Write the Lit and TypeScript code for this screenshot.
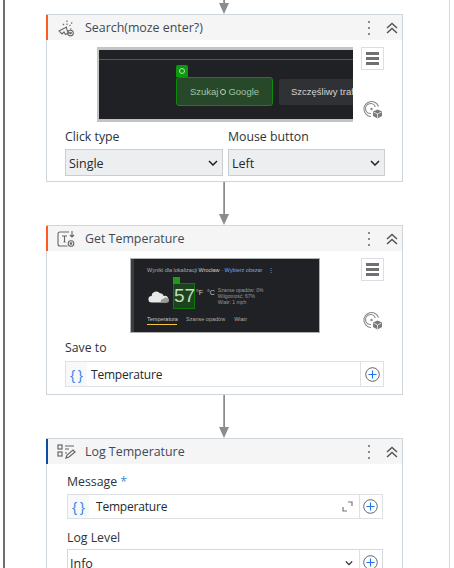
import { LitElement, html, css, svg } from "lit";
import { customElement } from "lit/decorators.js";

const dots = html`<svg class="dots" width="4" height="16" viewBox="0 0 4 16"><circle cx="2" cy="2" r="1"/><circle cx="2" cy="8" r="1"/><circle cx="2" cy="14" r="1"/></svg>`;
const chevrons = html`<svg class="chev" width="12" height="12" viewBox="0 0 12 12"><path d="M1 6l5-4.5L11 6M1 11l5-4.5L11 11"/></svg>`;
const arrow = (h: number) => html`<div class="conn" style="height:${h}px"><span class="line"></span><span class="head"></span></div>`;
const menu = html`<div class="menu"><span></span><span></span><span></span></div>`;
const target = html`<svg class="target" width="20" height="20" viewBox="0 0 20 20"><path d="M15.5 6.5A7.5 7.5 0 1 0 8 16.5M12.3 7A5 5 0 1 0 8 13.5" fill="none" stroke="#888" stroke-width="1.1"/><circle cx="8.5" cy="9" r="1.2" fill="#888"/><path d="M14.5 9.5l4.5 2v4.5l-4.5 2.5-4.5-2.5v-4.5z" fill="#7a7a7a"/><path d="M10.5 12l4 2 4-2M14.5 14v4" stroke="#fff" stroke-width=".7" fill="none"/></svg>`;
const plus = html`<svg width="15" height="15" viewBox="0 0 15 15"><circle cx="7.5" cy="7.5" r="6.8" fill="none" stroke="#666" stroke-width="1"/><path d="M7.5 3.5v8M3.5 7.5h8" stroke="#1a73e8" stroke-width="1.1"/></svg>`;
const caret = html`<svg class="caret" width="10" height="6" viewBox="0 0 10 6"><path d="M1 1l4 4 4-4" fill="none" stroke="#222" stroke-width="1.5"/></svg>`;

const iconClick = svg`<g fill="none" stroke="#666" stroke-width="1.1"><path d="M2 12l7.5-4 .5 3 1.5 3-3 1.5-1.5-2.5-2 2z"/><circle cx="13.5" cy="14" r="2.8"/><circle cx="13.5" cy="14" r=".8" fill="#666"/><path stroke-dasharray="1.5 1.5" d="M10 6V1M12.5 7l3-4M13 10h3M7 6L5 4"/></g>`;
const iconText = svg`<g fill="none" stroke="#666" stroke-width="1.1"><path d="M10.5 16H3a2 2 0 0 1-2-2V4a2 2 0 0 1 2-2h9"/><path d="M5 6h5M7.5 6v6M6.5 12h2"/><path d="M15 1v6M13 5l2 2 2-2"/><circle cx="14" cy="13.5" r="2.8"/><circle cx="14" cy="13.5" r=".8" fill="#666"/></g>`;
const iconLog = svg`<g fill="none" stroke="#666" stroke-width="1.2"><rect x="1" y="2" width="4" height="4"/><rect x="1" y="9" width="4" height="4"/><path d="M8 3h9M8 6h4M8 10h2"/><path d="M9 15l1-3 6-5 2 2-6 5z"/></g>`;

@customElement("app-root")
export class AppRoot extends LitElement {
  static styles = css`
    :host { display: block; width: 454px; height: 568px; overflow: hidden; background: #fff; font-family: "Open Sans", "Noto Sans", sans-serif; color: #24292e; }
    .frame { box-sizing: border-box; width: 447px; height: 568px; margin-left: 3px; border-left: 2px solid #6e6e6e; border-right: 1px solid #d3dadf; padding-left: 41px; overflow: hidden; }
    .flow { width: 357px; display: flex; flex-direction: column; }
    .conn { width: 357px; box-sizing: border-box; display: flex; flex-direction: column; align-items: center; justify-content: flex-end; padding-right: 1px; flex: none; }
    .line { width: 1px; flex: 1; background: #8c8c8c; border-left: 1px solid #a8a8a8; }
    .head { width: 0; height: 0; border-left: 5px solid transparent; border-right: 5px solid transparent; border-top: 11px solid #8c8c8c; }
    .card { box-sizing: border-box; width: 357px; border: 1px solid #ced6dc; background: #fff; flex: none; position: relative; }
    .hdr { height: 25px; background: #f5f5f5; display: flex; align-items: center; border-left: 2px solid #ff5a1f; margin-left: -1px; padding-left: 9px; }
    .hdr.blue { border-left-color: #0b4ea2; }
    .hdr .ic { width: 19px; height: 18px; flex: none; }
    .hdr .ttl { margin-left: 9px; font-size: 12.4px; font-weight: 500; color: #3f4a54; flex: 1; white-space: nowrap; }
    .dots { fill: #666; margin-right: 15px; flex: none; }
    .chev { fill: none; stroke: #555; stroke-width: 1.5; margin-right: 4px; flex: none; }
    .shotrow { display: flex; padding-top: 7px; height: 75px; }
    .shotbox { width: 314px; display: flex; flex: none; }
    .side { width: 23px; height: 75px; display: flex; flex-direction: column; justify-content: space-between; align-items: center; flex: none; }
    .menu { box-sizing: border-box; width: 23px; height: 23px; border: 1px solid #d9dfe4; display: flex; flex-direction: column; justify-content: center; gap: 2px; padding: 0 4px; }
    .menu span { height: 3px; background: #707070; }
    .target { margin-bottom: 2px; margin-left: 1px; }
    .shot { box-sizing: border-box; height: 75px; background: #202124; overflow: hidden; flex: none; }
    .s1 { width: 256px; margin-left: 50px; border: 1px solid #c4c4c4; border-width: 3px 0 3px 2px; padding-top: 9px; }
    .s1 .rule { height: 1px; background: #55575a; }
    .s1 .btns { display: flex; align-items: center; margin: 17px 0 0 77px; gap: 6px; }
    .gwrap { position: relative; flex: none; }
    .gbtn { box-sizing: border-box; width: 97px; height: 29px; background: #28482a; border: 1px solid #0b8a0b; border-radius: 3px; font-family: "Liberation Sans", Arial, sans-serif; font-size: 9.5px; color: #a5c4a4; display: flex; align-items: center; justify-content: center; gap: 2px; }
    .gbadge { position: absolute; left: 0; top: -12px; width: 12px; height: 12px; background: #0c9a0c; border-radius: 2px 2px 0 0; display: flex; align-items: center; justify-content: center; }
    .gdot { width: 6px; height: 6px; border: 1.5px solid #b7d9b7; border-radius: 50%; box-sizing: border-box; }
    .lbtn { box-sizing: border-box; width: 90px; height: 26px; background: #303134; border-radius: 3px; font-family: "Liberation Sans", Arial, sans-serif; font-size: 9.5px; color: #d4d5d7; padding-left: 12px; line-height: 26px; white-space: nowrap; flex: none; }
    .s2 { width: 190px; margin-left: 83px; border-left: 4px solid #3c3d40; outline: 1px solid #b0b0b0; outline-offset: -1px; padding: 9px 0 0 13px; font-family: "Liberation Sans", Arial, sans-serif; color: #a9abae; font-size: 5.5px; white-space: nowrap; }
    .s2 .top b { font-weight: 400; color: #d0d0d0; }
    .s2 .top i { font-style: normal; color: #7fa8e8; }
    .s2 .mid { display: flex; align-items: center; margin-top: 10px; height: 26px; }
    .cloud { width: 22px; height: 15px; flex: none; margin-left: 1px; margin-right: 3px; }
    .num { position: relative; box-sizing: border-box; width: 22px; height: 26px; background: #1c441c; border: 1px solid #0b7a0b; color: #c4dcc4; font-size: 19px; line-height: 24px; text-align: center; flex: none; }
    .numb { position: absolute; left: -1px; top: -7px; width: 7px; height: 7px; background: #1f9a1f; }
    .unit { font-size: 7px; margin: -8px 3px 0 1px; color: #c8c8c8; }
    .facts { line-height: 6px; font-size: 5px; color: #9a9a9a; }
    .tabs { display: flex; margin-top: 7px; gap: 9px; }
    .tab { padding-bottom: 2px; }
    .tab.on { color: #c5c5c5; border-bottom: 1px solid #f5c542; width: 30px; }
    .lbl { font-size: 12.3px; line-height: 16px; color: #2e3338; }
    .grid { display: grid; grid-template-columns: 158px 157px; gap: 5px; padding: 7px 18px 5px 18px; }
    .grid .lbl { margin-bottom: 4px; }
    .sel { box-sizing: border-box; height: 27px; background: #edeef0; border: 1px solid #c9ced3; display: flex; align-items: center; justify-content: space-between; padding: 1px 4px 0 3px; font-size: 12.5px; }
    .caret { flex: none; }
    .save { padding: 7px 18px 7px; }
    .inp { box-sizing: border-box; display: flex; align-items: stretch; height: 26px; border: 1px solid #dde1e5; margin-top: 5px; font-size: 12px; letter-spacing: -0.2px; }
    .br { width: 21px; background: #f7f8f9; color: #2f80e8; font-size: 14px; display: flex; align-items: center; justify-content: center; flex: none; letter-spacing: 0; word-spacing: -1px; white-space: nowrap; }
    .val { flex: 1; display: flex; align-items: center; padding-left: 4px; }
    .pl { width: 21px; padding-left: 1px; border-left: 1px solid #dde1e5; display: flex; align-items: center; justify-content: center; flex: none; }
    .log { padding: 10px 19px 0 20px; height: 120px; }
    .log .req { color: #3f8ae0; }
    .log .inp { margin-top: 4px; height: 25px; }
    .log .val { padding-left: 7px; }
    .log .pl { padding-left: 0; padding-right: 1px; }
    .log .lbl + .inp + .lbl { margin-top: 11px; }
    .expand { margin: auto 6px auto 0; }
    .log .log2 { margin-top: 3px; border-color: #d5d9dd; background: #fff; height: 27px; font-size: 12.5px; letter-spacing: 0; }
    .log .log2 .val { padding: 2px 0 0 2px; }
    .log2 .caret { align-self: center; margin-right: 6px; width: 8px; }
  `;

  render() {
    return html`<div class="frame"><div class="flow">
      ${arrow(14)}
      <div class="card">
        <div class="hdr"><svg class="ic" viewBox="0 0 19 18">${iconClick}</svg><span class="ttl">Search(moze enter?)</span>${dots}${chevrons}</div>
        <div class="shotrow">
          <div class="shotbox"><div class="shot s1"><div class="rule"></div>
            <div class="btns"><div class="gwrap"><div class="gbadge"><span class="gdot"></span></div><div class="gbtn">Szukaj <span class="gdot"></span> Google</div></div><div class="lbtn">Szczęśliwy traf</div></div>
          </div></div>
          <div class="side">${menu}${target}</div>
        </div>
        <div class="grid">
          <div><div class="lbl">Click type</div><div class="sel">Single ${caret}</div></div>
          <div><div class="lbl">Mouse button</div><div class="sel">Left ${caret}</div></div>
        </div>
      </div>
      ${arrow(43)}
      <div class="card">
        <div class="hdr"><svg class="ic" viewBox="0 0 19 18">${iconText}</svg><span class="ttl">Get Temperature</span>${dots}${chevrons}</div>
        <div class="shotrow">
          <div class="shotbox"><div class="shot s2">
            <div class="top">Wyniki dla lokalizacji <b>Wrocław</b> · <i>Wybierz obszar</i> &nbsp;&nbsp; ⋮</div>
            <div class="mid">
              <svg class="cloud" viewBox="0 0 24 15"><path d="M4 14a3.5 3.5 0 0 1 0-7 5 5 0 0 1 9-3 4 4 0 0 1 4 3 3.5 3.5 0 0 1 3 7z" fill="#e8e8e8"/><path d="M14 14a3 3 0 0 1 3-4 3 3 0 0 1 5 4z" fill="#9a9a9a"/></svg>
              <div class="num"><span class="numb"></span>57</div>
              <span class="unit">°F &nbsp;°C</span>
              <div class="facts">Szanse opadów: 0%<br />Wilgotność: 67%<br />Wiatr: 1 mph</div>
            </div>
            <div class="tabs"><span class="tab on">Temperatura</span><span class="tab">Szanse opadów</span><span class="tab">Wiatr</span></div>
          </div></div>
          <div class="side">${menu}${target}</div>
        </div>
        <div class="save">
          <div class="lbl">Save to</div>
          <div class="inp"><span class="br">{ }</span><span class="val">Temperature</span><span class="pl">${plus}</span></div>
        </div>
      </div>
      ${arrow(43)}
      <div class="card">
        <div class="hdr blue"><svg class="ic" viewBox="0 0 19 18">${iconLog}</svg><span class="ttl">Log Temperature</span>${dots}${chevrons}</div>
        <div class="log">
          <div class="lbl">Message <span class="req">*</span></div>
          <div class="inp"><span class="br">{ }</span><span class="val">Temperature</span>
            <svg class="expand" width="11" height="11" viewBox="0 0 11 11"><path d="M6 1h4v4M1 6v4h4" fill="none" stroke="#777" stroke-width="1.2"/></svg>
            <span class="pl">${plus}</span></div>
          <div class="lbl">Log Level</div>
          <div class="inp log2"><span class="val">Info</span>${caret}<span class="pl">${plus}</span></div>
        </div>
      </div>
    </div></div>`;
  }
}
